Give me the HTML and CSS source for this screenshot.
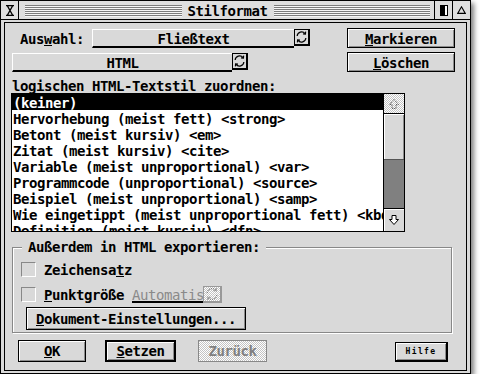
FILE: index.html
```html
<!DOCTYPE html>
<html>
<head>
<meta charset="utf-8">
<title>Stilformat</title>
<link rel="stylesheet" href="styles.css">
</head>
<body>

<div class="window">
	<div class="titlebar">
		<div class="tb-box closer">
			<svg width="8" height="11" viewBox="0 0 8 11"><path d="M0 0.5H8M0 10.5H8M1.5 1L6.5 10M6.5 1L1.5 10" stroke="#000" stroke-width="1.4" fill="none"/></svg>
		</div>
		<div class="tb-title">
			<span class="tb-lines"></span>
			<span class="tb-text">Stilformat</span>
			<span class="tb-lines"></span>
		</div>
		<div class="tb-box sep">
			<svg width="8" height="11" viewBox="0 0 8 11"><rect x="0.5" y="0.5" width="7" height="10" fill="#fff" stroke="#000"/><rect x="0" y="0" width="5" height="11" fill="#000"/></svg>
		</div>
		<div class="tb-box sep">
			<svg width="9" height="8" viewBox="0 0 9 8"><path d="M4.5 0.8L8.3 7.4H0.7Z" fill="none" stroke="#000" stroke-width="1.1"/></svg>
		</div>
	</div>

	<div class="work">
		<div class="dialog">

			<div class="row row-top">
				<span class="sel-label">Aus<u>w</u>ahl:</span>
				<div class="popup popup-style">
					<span class="popup-text">Fließtext</span>
					<span class="cycle">
						<svg width="14" height="14" viewBox="0 0 14 14" fill="none" stroke="#000" stroke-width="1.3"><path d="M2.3 6A4.8 4.8 0 0 1 10.8 3.3"/><path d="M8.6 3.6L11.2 3.8L11.4 1.2"/><path d="M11.7 8A4.8 4.8 0 0 1 3.2 10.7"/><path d="M5.4 10.4L2.8 10.2L2.6 12.8"/></svg>
					</span>
				</div>
				<div class="btn btn-side"><u>M</u>arkieren</div>
			</div>

			<div class="row row-second">
				<div class="popup popup-format">
					<span class="popup-text">HTML</span>
					<span class="cycle">
						<svg width="14" height="14" viewBox="0 0 14 14" fill="none" stroke="#000" stroke-width="1.3"><path d="M2.3 6A4.8 4.8 0 0 1 10.8 3.3"/><path d="M8.6 3.6L11.2 3.8L11.4 1.2"/><path d="M11.7 8A4.8 4.8 0 0 1 3.2 10.7"/><path d="M5.4 10.4L2.8 10.2L2.6 12.8"/></svg>
					</span>
				</div>
				<div class="btn btn-side"><u>L</u>öschen</div>
			</div>

			<div class="list-label">logischen HTML-Textstil zuordnen:</div>

			<div class="listbox">
				<div class="items">
					<div class="item selected">(keiner)</div>
					<div class="item">Hervorhebung (meist fett) &lt;strong&gt;</div>
					<div class="item">Betont (meist kursiv) &lt;em&gt;</div>
					<div class="item">Zitat (meist kursiv) &lt;cite&gt;</div>
					<div class="item">Variable (meist unproportional) &lt;var&gt;</div>
					<div class="item">Programmcode (unproportional) &lt;source&gt;</div>
					<div class="item">Beispiel (meist unproportional) &lt;samp&gt;</div>
					<div class="item">Wie eingetippt (meist unproportional fett) &lt;kbd&gt;</div>
					<div class="item">Definition (meist kursiv) &lt;dfn&gt;</div>
				</div>
				<div class="scrollbar">
					<div class="sb-arrow sb-up dither">
						<svg width="12" height="12" viewBox="0 0 12 12"><path d="M6 1.5L10.5 6.5H8V10.5H4V6.5H1.5Z" fill="none" stroke="#444" stroke-width="1" stroke-dasharray="1 1"/></svg>
					</div>
					<div class="sb-slider"></div>
					<div class="sb-track"></div>
					<div class="sb-arrow sb-down">
						<svg width="12" height="12" viewBox="0 0 12 12"><path d="M6 10.5L10.5 5.5H8V1.5H4V5.5H1.5Z" fill="#fff" stroke="#000" stroke-width="1"/></svg>
					</div>
				</div>
			</div>

			<div class="group">
				<div class="legend">Außerdem in HTML exportieren:</div>
				<div class="check-row first">
					<span class="checkbox"></span>
					<span class="check-label">Zeichensa<u>t</u>z</span>
				</div>
				<div class="check-row">
					<span class="checkbox"></span>
					<span class="check-label"><u>P</u>unktgröße</span>
					<span class="field-disabled">Automatis</span>
					<span class="cycle cycle-disabled dither">
						<svg width="14" height="14" viewBox="0 0 14 14" fill="none" stroke="#777" stroke-width="1.2" stroke-dasharray="1 1"><path d="M2.3 6A4.8 4.8 0 0 1 10.8 3.3"/><path d="M8.6 3.6L11.2 3.8L11.4 1.2"/><path d="M11.7 8A4.8 4.8 0 0 1 3.2 10.7"/><path d="M5.4 10.4L2.8 10.2L2.6 12.8"/></svg>
					</span>
				</div>
				<div class="btn btn-doc"><u>D</u>okument-Einstellungen...</div>
			</div>

			<div class="row row-bottom">
				<div class="btn btn-ok"><u>O</u>K</div>
				<div class="btn btn-default btn-set"><u>S</u>etzen</div>
				<div class="btn btn-disabled btn-back dither">Zurück</div>
				<div class="btn btn-help">Hilfe</div>
			</div>

		</div>
	</div>
</div>

</body>
</html>
```

FILE: styles.css
```css
body {
	margin: 0;
	background-color: #fff;
	color: #000;
	font-family: "DejaVu Sans Mono", monospace;
	font-weight: bold;
	font-size: 14px;
	letter-spacing: -0.43px;
	line-height: 16px;
}
u {
	text-decoration-thickness: 1px;
	text-underline-offset: 1px;
}
.dither {
	background: repeating-conic-gradient(#fff 0 25%, #c4c4c4 0 50%) 0 0 / 2px 2px;
}

/* window frame */
.window {
	width: 471px;
	height: 374px;
	box-sizing: border-box;
	border: 1px solid #000;
	background-color: #d9d9d9;
	box-shadow: 3px 3px 5px rgba(0, 0, 0, 0.5);
	display: flex;
	flex-direction: column;
}
.titlebar {
	height: 18px;
	border-bottom: 1px solid #000;
	display: flex;
	background-color: #dedede;
}
.tb-box {
	width: 17px;
	display: flex;
	align-items: center;
	justify-content: center;
}
.closer {
	border-right: 1px solid #000;
}
.tb-box.sep {
	border-left: 1px solid #000;
}
.tb-title {
	flex: 1;
	display: flex;
	padding: 0 4px 0 6px;
	overflow: hidden;
}
.tb-lines {
	flex: 1;
	height: 12px;
	margin-top: 4px;
	background: repeating-linear-gradient(to bottom, #7c7c7c 0 1px, #f6f6f6 1px 2px);
}
.tb-text {
	padding: 2px 6px 0 6px;
}
.work {
	flex: 1;
	padding: 2px 3px;
	display: flex;
}
.dialog {
	flex: 1;
	border: 1px solid #000;
	padding-top: 5px;
	display: flex;
	flex-direction: column;
}

/* rows */
.row {
	display: flex;
	align-items: flex-start;
}
.row-top {
	height: 20px;
}
.row-second {
	height: 20px;
	margin-top: 4px;
}
.sel-label {
	margin-left: 15px;
	width: 64px;
	padding-top: 3px;
}

/* popups */
.popup {
	display: flex;
	margin-top: 1px;
}
.popup-style {
	margin-left: 8px;
	width: 218px;
}
.popup-format {
	margin-left: 7px;
	width: 236px;
}
.popup-text {
	flex: 1;
	height: 19px;
	box-sizing: border-box;
	border-top: 1px solid #fff;
	border-left: 1px solid #fff;
	border-bottom: 2px solid #000;
	padding-top: 1px;
	text-align: center;
}
.cycle {
	width: 16px;
	height: 17px;
	box-sizing: border-box;
	border: 1px solid #000;
	border-bottom-width: 2px;
	border-right-width: 2px;
	display: flex;
	align-items: center;
	justify-content: center;
	background-color: #d9d9d9;
}

/* buttons */
.btn {
	box-sizing: border-box;
	border: 1px solid #000;
	box-shadow: inset 1px 1px 0 #fff, inset -1px -1px 0 #8c8c8c;
	text-align: center;
	padding-top: 2px;
}
.btn-side {
	margin-left: auto;
	margin-right: 11px;
	width: 108px;
	height: 20px;
}
.btn-default {
	border-width: 2px;
	padding-top: 1px;
}
.btn-disabled {
	border-color: #888;
	color: #808080;
	box-shadow: none;
}

/* list */
.list-label {
	margin: 6px 0 0 7px;
	height: 15px;
}
.listbox {
	margin-left: 6px;
	width: 394px;
	height: 139px;
	box-sizing: border-box;
	border: 1px solid #000;
	background-color: #fff;
	display: flex;
}
.items {
	flex: 1;
	overflow: hidden;
	white-space: nowrap;
}
.item {
	height: 16px;
	padding: 1px 0 0 1px;
	box-sizing: border-box;
	line-height: 16px;
}
.item.selected {
	background-color: #000;
	color: #fff;
}
.scrollbar {
	width: 20px;
	border-left: 1px solid #000;
	display: flex;
	flex-direction: column;
	background-color: #d9d9d9;
}
.sb-arrow {
	display: flex;
	align-items: center;
	justify-content: center;
}
.sb-up {
	height: 19px;
	border-bottom: 1px solid #000;
}
.sb-slider {
	height: 46px;
	box-sizing: border-box;
	border-bottom: 1px solid #555;
	box-shadow: inset 1px 1px 0 #fff, inset -1px 0 0 #8c8c8c;
}
.sb-track {
	height: 48px;
	background-color: #808080;
}
.sb-down {
	height: 22px;
	border-top: 1px solid #000;
	box-shadow: inset 1px 1px 0 #fff;
}

/* group */
.group {
	margin: 15px 0 0 7px;
	width: 440px;
	height: 86px;
	box-sizing: border-box;
	border: 1px solid #888;
	box-shadow: inset 1px 1px 0 #fff, 1px 1px 0 #fff;
	display: flex;
	flex-direction: column;
}
.legend {
	margin: -9px 0 0 9px;
	padding: 0 6px;
	width: fit-content;
	height: 16px;
	background-color: #d9d9d9;
}
.check-row {
	height: 20px;
	margin-top: 5px;
	display: flex;
	align-items: flex-start;
}
.check-row.first {
	margin-top: 4px;
}
.checkbox {
	margin: 3px 0 0 8px;
	width: 15px;
	height: 15px;
	box-sizing: border-box;
	border-top: 1px solid #888;
	border-left: 1px solid #888;
	border-right: 1px solid #fff;
	border-bottom: 1px solid #fff;
}
.check-label {
	margin-left: 8px;
	padding-top: 3px;
}
.field-disabled {
	margin: 2px 0 0 8px;
	width: 71px;
	height: 17px;
	box-sizing: border-box;
	border-bottom: 2px solid #000;
	color: #8a8a8a;
	font-weight: normal;
	overflow: hidden;
	padding-top: 1px;
}
.cycle-disabled {
	margin-top: 2px;
	width: 19px;
	border-color: #999;
}
.btn-doc {
	margin: 3px 0 0 13px;
	width: 220px;
	height: 23px;
	padding-top: 3px;
}

/* bottom buttons */
.row-bottom {
	margin-top: 7px;
	height: 22px;
}
.btn-ok {
	margin-left: 13px;
	width: 68px;
	height: 22px;
}
.btn-set {
	margin-left: 19px;
	width: 71px;
	height: 22px;
}
.btn-back {
	margin-left: 22px;
	width: 69px;
	height: 22px;
}
.btn-help {
	margin: 2px 18px 0 auto;
	width: 53px;
	height: 20px;
	padding-top: 3px;
	border-width: 1px 2px 2px 1px;
	font-size: 8px;
	letter-spacing: 1.4px;
	line-height: 12px;
}
```
